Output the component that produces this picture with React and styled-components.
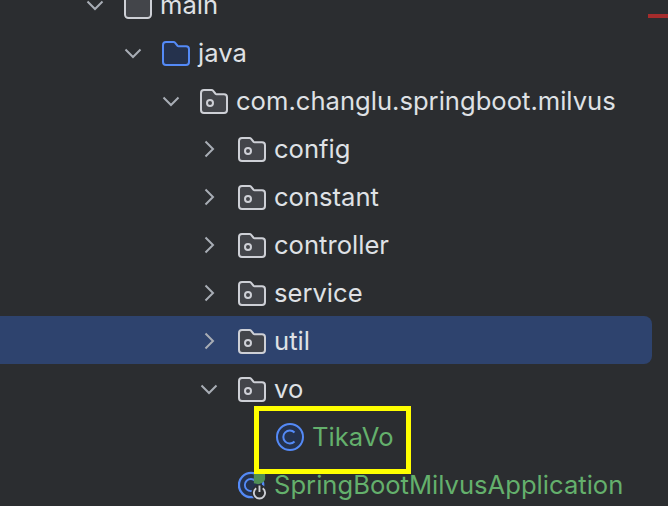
import styled, { createGlobalStyle } from "styled-components";

const GlobalStyle = createGlobalStyle`
  html, body {
    margin: 0;
    padding: 0;
    background: #2b2d30;
  }
`;

const Panel = styled.div`
  position: relative;
  width: 668px;
  height: 506px;
  overflow: hidden;
  background: #2b2d30;
  font-family: Inter, "Liberation Sans", sans-serif;
`;

const Tree = styled.div`
  display: flex;
  flex-direction: column;
  margin-top: -20px;
  width: 652px;
`;

const Row = styled.div`
  display: flex;
  align-items: center;
  flex: none;
  box-sizing: border-box;
  height: 48px;
  padding-top: 2px;
  padding-left: ${(props) => 81 + props.depth * 38}px;
  background: ${(props) => (props.selected ? "#2e436e" : "transparent")};
  border-radius: ${(props) => (props.selected ? "0 8px 8px 0" : "0")};
`;

const Arrow = styled.span`
  display: flex;
  justify-content: center;
  flex: none;
  width: 28px;
  margin-right: 15px;
`;

const IconSlot = styled.span`
  display: flex;
  flex: none;
  width: 28px;
  height: 28px;
  margin-right: 8px;
  margin-left: ${(props) => (props.leaf ? "43px" : "0")};
`;

const Label = styled.span`
  font-size: 25.6px;
  line-height: 32px;
  white-space: nowrap;
  color: ${(props) => (props.green ? "#64b06c" : "#dfe1e5")};
`;

const Highlight = styled.div`
  position: absolute;
  left: 254px;
  top: 406px;
  width: 157px;
  height: 68px;
  box-sizing: border-box;
  border: 5px solid #ffff00;
`;

const ErrorMark = styled.div`
  position: absolute;
  right: 0;
  top: 14px;
  width: 20px;
  height: 4px;
  background: #a52c2c;
`;

const Chevron = ({ open }) => (
  <svg width="20" height="20" viewBox="0 0 20 20" fill="none" stroke="#a8adb5" strokeWidth="2">
    {open ? <path d="M2.5 6.5 10 14l7.5-7.5" /> : <path d="M6.5 2.5 14 10l-7.5 7.5" />}
  </svg>
);

const SourceRoot = () => (
  <svg width="28" height="28" viewBox="0 0 28 28">
    <rect x="1" y="1" width="26" height="26" rx="3.5" fill="#43454a" stroke="#ced0d6" strokeWidth="2" />
  </svg>
);

const FOLDER = "M4 3h7.500c.6 0 1.100.2 1.500.7l2.500 3c.3.3.6.5 1 .5H24a3 3 0 0 1 3 3V23a3 3 0 0 1-3 3H4a3 3 0 0 1-3-3V6a3 3 0 0 1 3-3Z";

const Folder = ({ blue }) => (
  <svg width="28" height="28" viewBox="0 0 28 28">
    <path d={FOLDER} fill={blue ? "#25324d" : "#43454a"} stroke={blue ? "#548af7" : "#ced0d6"} strokeWidth="2" />
    {!blue && <circle cx="10" cy="16" r="3" fill="none" stroke="#ced0d6" strokeWidth="2" />}
  </svg>
);

const ClassIcon = () => (
  <svg width="28" height="28" viewBox="0 0 28 28" fill="none" stroke="#548af7">
    <circle cx="14" cy="14" r="13" strokeWidth="2" fill="#25324d" />
    <path d="M18.500 9.500a6.500 6.500 0 1 0 0 9" strokeWidth="2" />
  </svg>
);

const SpringIcon = () => (
  <svg width="30" height="30" viewBox="0 0 30 30" fill="none">
    <circle cx="14" cy="14" r="13" stroke="#548af7" strokeWidth="2.500" fill="#25324d" />
    <path d="M18.500 9.500a6.500 6.500 0 1 0 0 9" stroke="#548af7" strokeWidth="2" />
    <path d="M17 2h12v5c0 3-3 5-7 6l-5-1Z" fill="#4f8f56" />
    <circle cx="23" cy="22" r="8.500" fill="#2b2d30" />
    <path d="M19.500 17.500a6 6 0 1 0 7 0M23 14.500v7" stroke="#ced0d6" strokeWidth="2" />
  </svg>
);

const rows = [
  { name: "main", depth: 0, open: true, icon: <SourceRoot /> },
  { name: "java", depth: 1, open: true, icon: <Folder blue /> },
  { name: "com.changlu.springboot.milvus", depth: 2, open: true, icon: <Folder /> },
  { name: "config", depth: 3, icon: <Folder /> },
  { name: "constant", depth: 3, icon: <Folder /> },
  { name: "controller", depth: 3, icon: <Folder /> },
  { name: "service", depth: 3, icon: <Folder /> },
  { name: "util", depth: 3, selected: true, icon: <Folder /> },
  { name: "vo", depth: 3, open: true, icon: <Folder /> },
  { name: "TikaVo", depth: 4, leaf: true, green: true, icon: <ClassIcon /> },
  { name: "SpringBootMilvusApplication", depth: 3, leaf: true, green: true, icon: <SpringIcon /> },
];

const App = () => {
  return (
    <Panel>
      <GlobalStyle />
      <Tree>
        {rows.map((row) => (
          <Row key={row.name} depth={row.depth} selected={row.selected}>
            {!row.leaf && (
              <Arrow>
                <Chevron open={row.open} />
              </Arrow>
            )}
            <IconSlot leaf={row.leaf}>{row.icon}</IconSlot>
            <Label green={row.green}>{row.name}</Label>
          </Row>
        ))}
      </Tree>
      <Highlight />
      <ErrorMark />
    </Panel>
  );
};

export default App;
